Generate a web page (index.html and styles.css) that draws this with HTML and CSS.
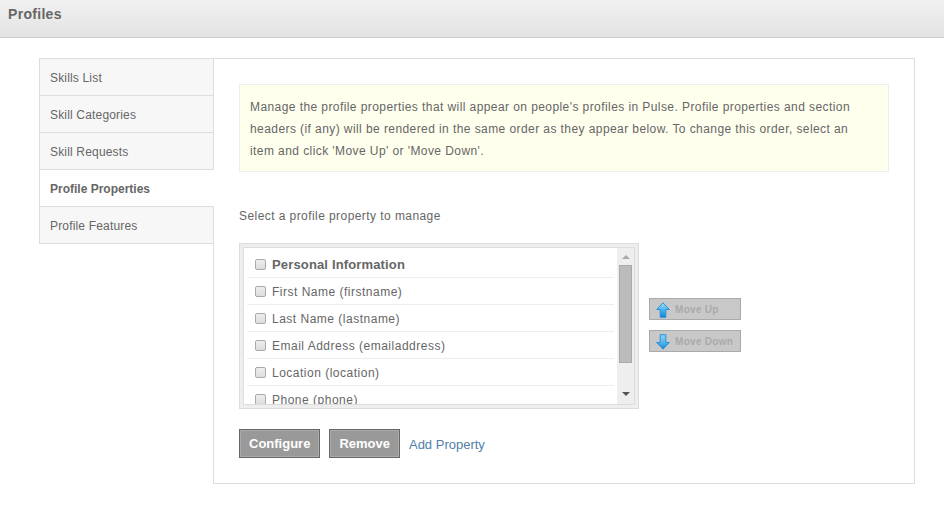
FILE: index.html
```html
<!DOCTYPE html>
<html lang="en">
<head>
    <meta charset="UTF-8">
    <title>Profiles</title>
    <link rel="stylesheet" href="styles.css">
</head>
<body>
<header class="page-header">
    <h1>Profiles</h1>
</header>
<main class="layout">
    <nav class="side-nav">
        <a href="#">Skills List</a>
        <a href="#">Skill Categories</a>
        <a href="#">Skill Requests</a>
        <a href="#" class="active">Profile Properties</a>
        <a href="#">Profile Features</a>
    </nav>
    <section class="content">
        <p class="notice">Manage the profile properties that will appear on people's profiles in Pulse. Profile properties and section headers (if any) will be rendered in the same order as they appear below. To change this order, select an item and click 'Move Up' or 'Move Down'.</p>
        <p class="select-label">Select a profile property to manage</p>
        <div class="picker">
            <div class="list-frame">
                <div class="list-box">
                    <ul class="prop-list">
                        <li class="heading"><input type="checkbox">Personal Information</li>
                        <li><input type="checkbox">First Name (firstname)</li>
                        <li><input type="checkbox">Last Name (lastname)</li>
                        <li><input type="checkbox">Email Address (emailaddress)</li>
                        <li><input type="checkbox">Location (location)</li>
                        <li><input type="checkbox">Phone (phone)</li>
                    </ul>
                    <div class="scrollbar">
                        <span class="arrow-up"></span>
                        <span class="thumb"></span>
                        <span class="arrow-down"></span>
                    </div>
                </div>
            </div>
            <div class="move-buttons">
                <button class="move-btn" disabled>
                    <svg width="14" height="16" viewBox="0 0 14 16">
                        <defs>
                            <linearGradient id="upFill" x1="0" y1="0" x2="0" y2="1">
                                <stop offset="0" stop-color="#a5e2fb"/>
                                <stop offset="0.5" stop-color="#45b4ee"/>
                                <stop offset="1" stop-color="#1585d8"/>
                            </linearGradient>
                        </defs>
                        <path d="M7 .8 L13.3 7.5 H9.8 V15.3 H4.2 V7.5 H.7 Z" fill="url(#upFill)" stroke="#2a8fd8" stroke-linejoin="round"/>
                    </svg>
                    Move Up
                </button>
                <button class="move-btn" disabled>
                    <svg width="14" height="16" viewBox="0 0 14 16">
                        <defs>
                            <linearGradient id="downFill" x1="0" y1="0" x2="0" y2="1">
                                <stop offset="0" stop-color="#8ed6fa"/>
                                <stop offset="0.6" stop-color="#4bb2ee"/>
                                <stop offset="1" stop-color="#1a7fd4"/>
                            </linearGradient>
                        </defs>
                        <path d="M7 15.2 L13.3 8.5 H9.8 V.7 H4.2 V8.5 H.7 Z" fill="url(#downFill)" stroke="#2a8fd8" stroke-linejoin="round"/>
                    </svg>
                    Move Down
                </button>
            </div>
        </div>
        <div class="actions">
            <button class="action-btn">Configure</button>
            <button class="action-btn">Remove</button>
            <a href="#" class="add-link">Add Property</a>
        </div>
    </section>
</main>
</body>
</html>
```

FILE: styles.css
```css
body {
    margin: 0;
    font-family: "Liberation Sans", Arial, sans-serif;
    font-size: 12px;
    color: #666;
    background-color: #fff;
}

.page-header {
    height: 37px;
    background: linear-gradient(#f1f1f1, #e3e3e3);
    border-bottom: 1px solid #ccc;
}

.page-header h1 {
    margin: 0;
    padding: 7px 0 0 8px;
    font-size: 14px;
    line-height: 15px;
    letter-spacing: 0.3px;
    color: #666;
}

.layout {
    display: flex;
    margin: 20px 29px 0 39px;
}

.side-nav {
    width: 175px;
    flex-shrink: 0;
    display: flex;
    flex-direction: column;
    align-self: flex-start;
    border-top: 1px solid #ddd;
    position: relative;
    z-index: 1;
    margin-right: -1px;
}

.side-nav a {
    height: 35px;
    line-height: 36px;
    padding: 1px 0 0 10px;
    background-color: #f7f7f7;
    border-left: 1px solid #ddd;
    border-bottom: 1px solid #ddd;
    border-right: 1px solid #ddd;
    color: #666;
    text-decoration: none;
    letter-spacing: 0.17px;
}

.side-nav a.active {
    background-color: #fff;
    border-right-color: #fff;
    font-weight: bold;
    letter-spacing: 0;
}

.content {
    flex: 1;
    height: 399px;
    border: 1px solid #ddd;
    padding: 25px 25px 0 25px;
}

.notice {
    margin: 0;
    padding: 11px 20px 9px 10px;
    background-color: #ffe;
    border: 1px solid #eee;
    line-height: 22px;
    letter-spacing: 0.42px;
}

.select-label {
    margin: 37px 0 0 0;
    line-height: 15px;
    letter-spacing: 0.43px;
}

.picker {
    display: flex;
    align-items: center;
    margin-top: 19px;
}

.list-frame {
    width: 392px;
    height: 158px;
    padding: 3px;
    background-color: #eee;
    border: 1px solid #ddd;
}

.list-box {
    display: flex;
    box-sizing: border-box;
    height: 158px;
    border: 1px solid #ddd;
    background-color: #fff;
    overflow: hidden;
}

.prop-list {
    flex: 1;
    margin: 0;
    padding: 3px 3px 0 3px;
    list-style: none;
    font-size: 12px;
}

.prop-list li {
    display: flex;
    align-items: center;
    height: 24px;
    padding-top: 2px;
    border-bottom: 1px solid #eee;
    letter-spacing: 0.5px;
}

.prop-list li.heading {
    height: 26px;
    padding-top: 0;
    font-weight: bold;
    font-size: 13px;
    letter-spacing: 0.15px;
}

.prop-list input {
    appearance: none;
    width: 11px;
    height: 11px;
    margin: 0 6px 2px 8px;
    border: 1px solid #aaa;
    border-radius: 2px;
    background: linear-gradient(#eee, #ddd);
}

.prop-list li.heading input {
    margin-bottom: 0;
}

.scrollbar {
    width: 17px;
    display: flex;
    flex-direction: column;
    align-items: center;
    flex-shrink: 0;
    background-color: #eee;
}

.thumb {
    width: 13px;
    height: 98px;
    margin-top: 6px;
    background-color: #bbb;
    border: 1px solid #aaa;
    box-sizing: border-box;
}

.arrow-up {
    margin-top: 7px;
    border-left: 4px solid transparent;
    border-right: 4px solid transparent;
    border-bottom: 4px solid #aaa;
}

.arrow-down {
    margin-top: 29px;
    border-left: 4px solid transparent;
    border-right: 4px solid transparent;
    border-top: 4px solid #555;
}

.move-buttons {
    display: flex;
    flex-direction: column;
    gap: 10px;
    margin: 0 0 2px 10px;
}

.move-btn {
    display: flex;
    align-items: center;
    gap: 5px;
    width: 92px;
    height: 22px;
    padding: 1px 0 0 6px;
    background-color: #c8c8c8;
    border: 1px solid #aaa;
    color: #aaa;
    font-family: inherit;
    font-size: 10px;
    font-weight: bold;
    letter-spacing: 0.3px;
}

.actions {
    display: flex;
    align-items: center;
    margin-top: 20px;
}

.action-btn {
    height: 29px;
    padding: 0 9px;
    margin-right: 9px;
    background-color: #999;
    border: 1px solid #666;
    box-shadow: inset 0 0 0 1px #aaa;
    color: #fff;
    font-family: inherit;
    font-size: 13px;
    font-weight: bold;
}

.add-link {
    padding-top: 1px;
    color: #4f80ab;
    font-size: 13px;
    text-decoration: none;
}
```
